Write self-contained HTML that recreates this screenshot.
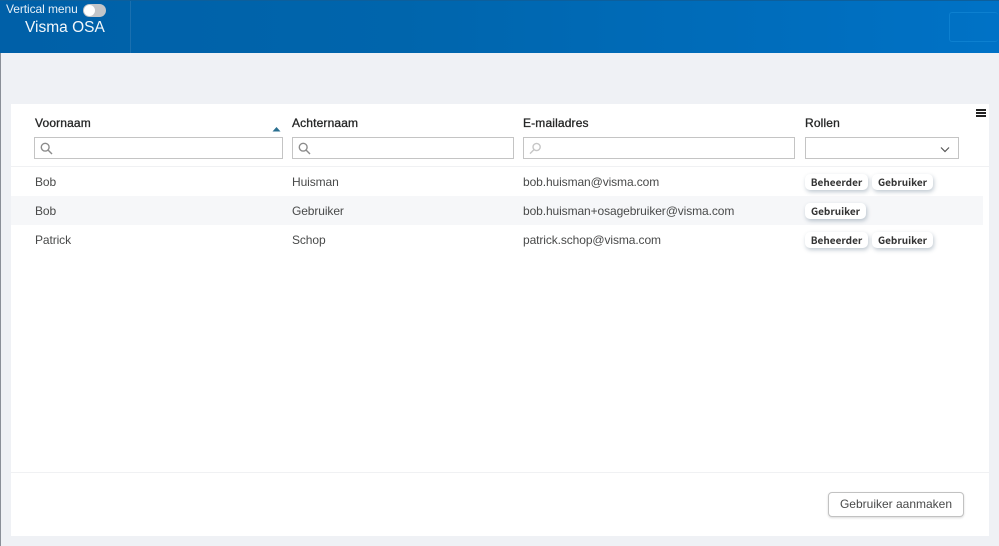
<!DOCTYPE html>
<html><head><meta charset="utf-8"><style>
html,body{margin:0;padding:0}
body{width:999px;height:546px;position:relative;overflow:hidden;background:#eff1f5;font-family:"Liberation Sans",sans-serif;color:#3a3a3a}
.a{position:absolute;white-space:nowrap}
.h{font-size:12px;color:#252626;-webkit-text-stroke:.3px #252626;line-height:16px;top:115px;letter-spacing:.15px}
.c{font-size:12px;line-height:16px;color:#494a4a;letter-spacing:-.1px}
.i{position:absolute;top:137px;height:20px;border:1px solid #c4c4c4;background:#fff}
.t{position:absolute;height:16px;line-height:15px;background:#fff;border-radius:5px;box-shadow:1px 2px 4px rgba(30,60,90,.28);font-family:"Noto Sans CJK JP",sans-serif;font-weight:700;font-size:10px;color:#333;text-align:center}
svg{position:absolute}
</style></head><body>
<div class="a" style="left:0;top:0;width:999px;height:53px;background:linear-gradient(90deg,#0060a8 0,#0065ac 40%,#0072c6 100%);border-top:1px solid #0d5f9c;box-sizing:border-box"></div>
<div class="a" style="left:130px;top:1px;width:1px;height:52px;background:#1a70b0"></div>
<div class="a" style="left:949px;top:12px;width:49px;height:30px;border:1px solid #0d80d0;border-right:0;border-radius:3px;box-sizing:border-box"></div>
<div class="a" style="left:0;top:53px;width:1px;height:493px;background:#8a8f98"></div>
<div class="a" style="left:6px;top:2px;font-size:12px;line-height:15px;color:#e6f0f8;letter-spacing:-.08px">Vertical menu</div>
<div class="a" style="left:83px;top:4px;width:23px;height:13px;border-radius:7px;background:#c2c5c9"></div>
<div class="a" style="left:84px;top:5px;width:11px;height:11px;border-radius:50%;background:#fff"></div>
<div class="a" style="left:25px;top:18px;font-size:15.5px;line-height:20px;color:#f2f7fb">Visma OSA</div>

<div class="a" style="left:11px;top:104px;width:978px;height:432px;background:#fff"></div>
<div class="a" style="left:11px;top:166px;width:978px;height:1px;background:#f0f1f3"></div>
<div class="a" style="left:11px;top:196px;width:972px;height:29px;background:#f6f7f9"></div>
<div class="a" style="left:11px;top:472px;width:978px;height:1px;background:#f0f1f3"></div>

<div class="a" style="left:976px;top:109px;width:10px;height:2px;background:#222;box-shadow:0 3px 0 #222,0 6px 0 #222"></div>

<div class="a h" style="left:35px">Voornaam</div>
<div class="a h" style="left:292px">Achternaam</div>
<div class="a h" style="left:523px">E-mailadres</div>
<div class="a h" style="left:805px">Rollen</div>
<svg style="left:272px;top:126px" width="9" height="6"><path d="M0.5 5.5L4.5 1L8.5 5.5Z" fill="#2a6f90"/></svg>

<div class="i" style="left:34px;width:247px"></div>
<div class="i" style="left:292px;width:220px"></div>
<div class="i" style="left:523px;width:270px"></div>
<div class="i" style="left:805px;width:152px"></div>
<svg style="left:40px;top:142px" width="13" height="13" fill="none" stroke="#8b8b8b" stroke-width="1.4"><circle cx="5.2" cy="5.2" r="3.9"/><path d="M8 8l4 4"/></svg>
<svg style="left:298px;top:142px" width="13" height="13" fill="none" stroke="#8b8b8b" stroke-width="1.4"><circle cx="5.2" cy="5.2" r="3.9"/><path d="M8 8l4 4"/></svg>
<svg style="left:529px;top:142px" width="13" height="13" fill="none" stroke="#c6c6c6" stroke-width="1.4"><circle cx="7.6" cy="5" r="3.6"/><path d="M5 7.6l-4 4"/></svg>
<svg style="left:940px;top:146px" width="10" height="7" fill="none" stroke="#555" stroke-width="1.2"><path d="M1 1.5l4 4 4-4"/></svg>

<div class="a c" style="left:35px;top:174px">Bob</div>
<div class="a c" style="left:292px;top:174px">Huisman</div>
<div class="a c" style="left:523px;top:174px">bob.huisman@visma.com</div>
<div class="a c" style="left:35px;top:203px">Bob</div>
<div class="a c" style="left:292px;top:203px">Gebruiker</div>
<div class="a c" style="left:523px;top:203px">bob.huisman+osagebruiker@visma.com</div>
<div class="a c" style="left:35px;top:232px">Patrick</div>
<div class="a c" style="left:292px;top:232px">Schop</div>
<div class="a c" style="left:523px;top:232px">patrick.schop@visma.com</div>

<div class="t" style="left:805px;top:174px;width:63px">Beheerder</div>
<div class="t" style="left:872px;top:174px;width:61px">Gebruiker</div>
<div class="t" style="left:805px;top:203px;width:61px">Gebruiker</div>
<div class="t" style="left:805px;top:232px;width:63px">Beheerder</div>
<div class="t" style="left:872px;top:232px;width:61px">Gebruiker</div>

<div class="a" style="left:828px;top:492px;width:136px;height:25px;box-sizing:border-box;border:1px solid #c2c2c2;border-radius:4px;background:#fff;box-shadow:0 1px 2px rgba(0,0,0,.15);font-size:12px;line-height:23px;text-align:center;color:#494a4a">Gebruiker aanmaken</div>
</body></html>
